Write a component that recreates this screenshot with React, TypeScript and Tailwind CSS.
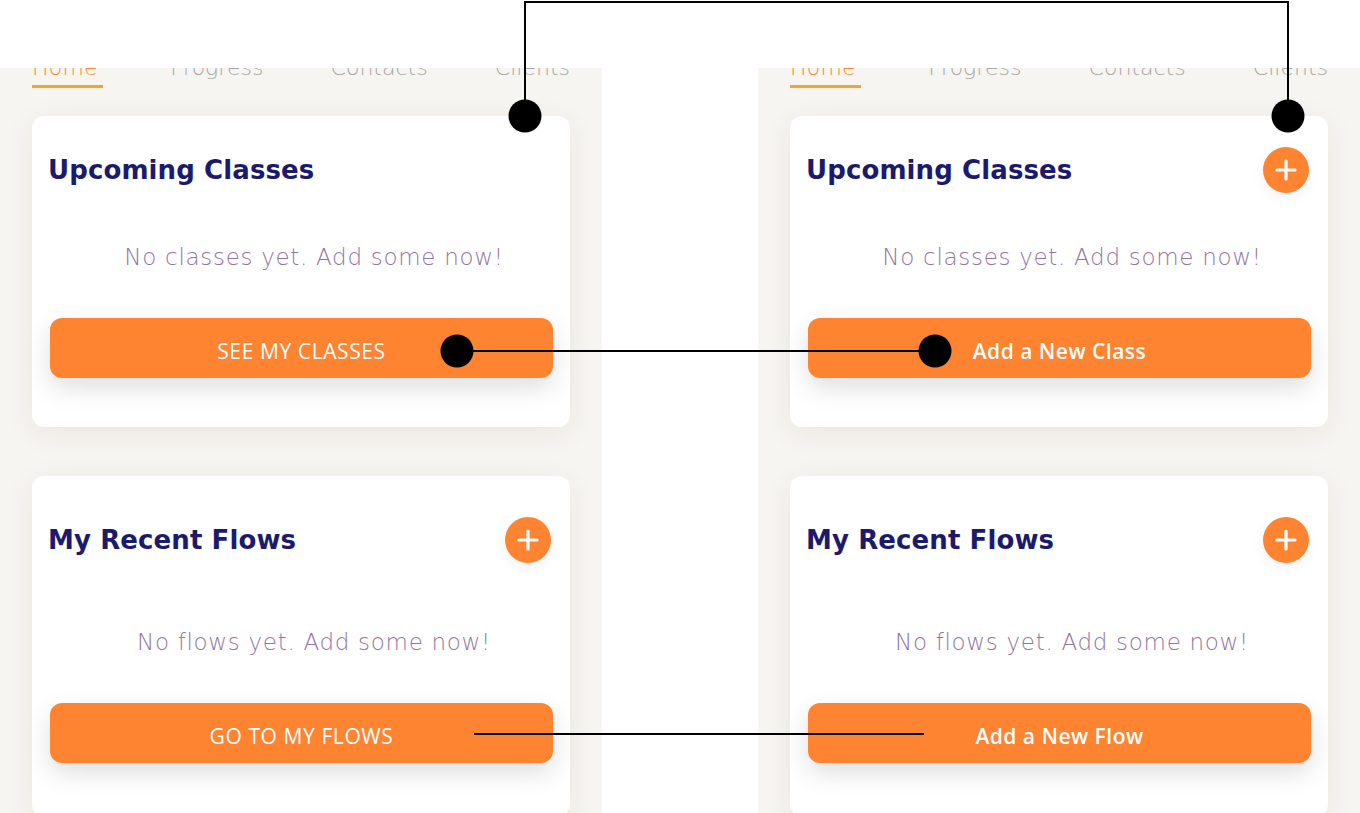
import React from "react";

const TITLE_FONT = { fontFamily: '"DejaVu Sans", sans-serif' };

function PlusButton() {
  return (
    <div className="w-[46px] h-[46px] rounded-full bg-[#ff8431] flex items-center justify-center shadow-[0_4px_14px_rgba(0,0,0,0.06)]">
      <svg width="24" height="24" viewBox="0 0 24 24">
        <path d="M12 3v18M3 12h18" stroke="white" strokeWidth="3.2" strokeLinecap="round" />
      </svg>
    </div>
  );
}

function Tabs() {
  return (
    <div className="mt-[-16px] flex justify-between text-[22px] font-light text-[#a9a7a4]" style={{ fontFamily: '"DejaVu Sans", sans-serif' }}>
      <div className="flex flex-col">
        <span className="text-[#fb8a2e] leading-[32px] tracking-[0.2px]">Home</span>
        <div className="mt-[1px] h-[3px] w-[71px] bg-[#f8a42a]" />
      </div>
      <span className="leading-[32px]">Progress</span>
      <span className="leading-[32px]">Contacts</span>
      <span className="leading-[32px]">Clients</span>
    </div>
  );
}

function Card({
  title,
  body,
  button,
  plus,
  variant,
  top,
  titleGap,
  height,
}: {
  title: string;
  body: string;
  button: string;
  plus: boolean;
  variant: "old" | "new";
  top: string;
  titleGap: string;
  height: string;
}) {
  return (
    <div className={`bg-white rounded-[12px] shadow-[0_6px_30px_rgba(60,40,10,0.07)] flex flex-col ${height}`}>
      <div className={`flex items-center justify-between pl-[16px] pr-[19px] h-[46px] ${top}`}>
        <h2 className="text-[26px] font-bold text-[#1b1a6d] tracking-[0.1px]" style={TITLE_FONT}>
          {title}
        </h2>
        {plus && <PlusButton />}
      </div>
      <p
        className={`${titleGap} text-center text-[23px] leading-[34px] font-extralight text-[#9276a1] tracking-[0.7px] pl-[26px]`}
        style={{ fontFamily: '"DejaVu Sans", sans-serif' }}
      >
        {body}
      </p>
      <div className="mt-[44px] pl-[18px] pr-[17px]">
        <button
          className={`w-full h-[60px] pt-[8px] rounded-[12px] bg-[#ff8431] text-white shadow-[0_10px_26px_rgba(0,0,0,0.13)] text-[21px] ${
            variant === "old" ? "font-normal tracking-[0.6px]" : "font-semibold tracking-[0.5px]"
          }`}
          style={{ fontFamily: '"Open Sans", sans-serif' }}
        >
          {button}
        </button>
      </div>
    </div>
  );
}

function Panel({ variant }: { variant: "old" | "new" }) {
  return (
    <div className="w-[602px] h-[745px] bg-[#f7f5f1] overflow-hidden px-[32px]">
      <Tabs />
      <div className="mt-[28px] flex flex-col gap-[49px]">
        <Card
          title="Upcoming Classes"
          body="No classes yet. Add some now!"
          button={variant === "old" ? "SEE MY CLASSES" : "Add a New Class"}
          plus={variant === "new"}
          variant={variant}
          top="mt-[31px]"
          titleGap="mt-[47px]"
          height="h-[311px]"
        />
        <Card
          title="My Recent Flows"
          body="No flows yet. Add some now!"
          button={variant === "old" ? "GO TO MY FLOWS" : "Add a New Flow"}
          plus={true}
          variant={variant}
          top="mt-[41px]"
          titleGap="mt-[62px]"
          height="h-[340px]"
        />
      </div>
    </div>
  );
}

export default function App() {
  return (
    <div className="relative w-[1360px] h-[813px] bg-white overflow-hidden">
      <div className="pt-[68px] flex gap-[156px]">
        <Panel variant="old" />
        <Panel variant="new" />
      </div>
      <svg className="absolute inset-0 pointer-events-none" width="1360" height="813">
        <path d="M525 116 V2 H1288 V116" fill="none" stroke="black" strokeWidth="2" />
        <circle cx="525" cy="116" r="16.5" fill="black" />
        <circle cx="1288" cy="116" r="16.5" fill="black" />
        <line x1="457" y1="351" x2="935" y2="351" stroke="black" strokeWidth="2" />
        <circle cx="457" cy="351" r="16.5" fill="black" />
        <circle cx="935" cy="351" r="16.5" fill="black" />
        <line x1="474" y1="734" x2="924" y2="734" stroke="black" strokeWidth="2" />
      </svg>
    </div>
  );
}
